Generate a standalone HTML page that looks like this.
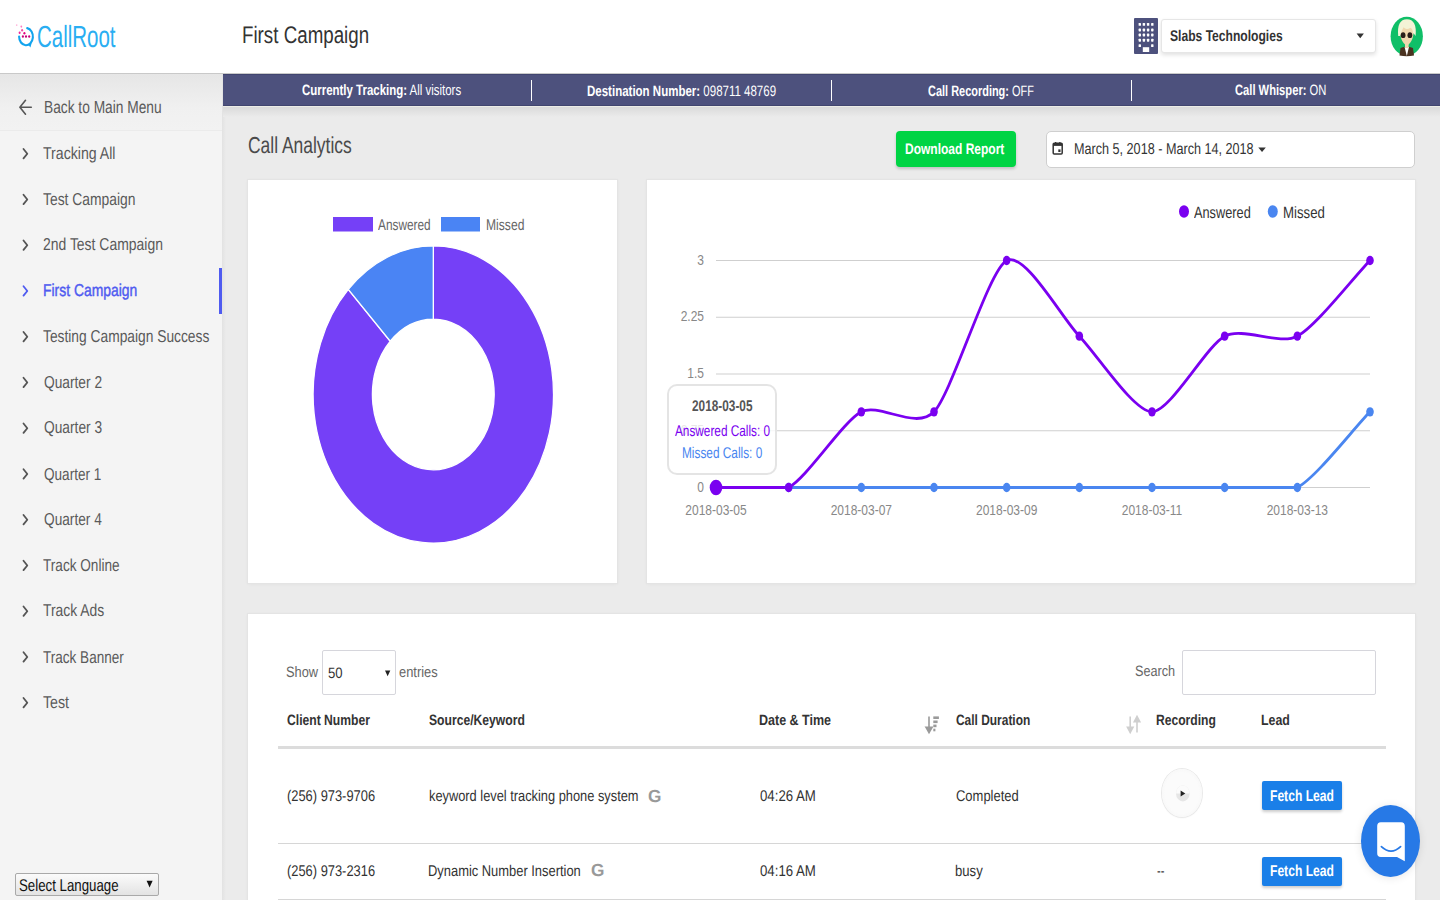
<!DOCTYPE html>
<html><head><meta charset="utf-8"><style>
html,body{margin:0;padding:0;width:1440px;height:900px;overflow:hidden;background:#ebebeb;font-family:"Liberation Sans",sans-serif}
.a{position:absolute}
.t{position:absolute;white-space:nowrap;line-height:1;transform-origin:0 0;text-rendering:geometricPrecision;font-family:'Liberation Sans',sans-serif}.t b{font-weight:700}
svg{position:absolute;left:0;top:0}
</style></head><body>
<!-- header -->
<div class="a" style="left:0;top:0;width:1440px;height:73px;background:#fff"></div>
<div class="a" style="left:0;top:73px;width:1440px;height:1px;background:#c9c9c9"></div>
<!-- sidebar -->
<div class="a" style="left:0;top:74px;width:222px;height:826px;background:#f4f4f4"></div>
<div class="a" style="left:0;top:74px;width:222px;height:56px;background:linear-gradient(#e6e6e6,#f0f0f0 60%,#f2f2f2)"></div>
<div class="a" style="left:0;top:130px;width:222px;height:1px;background:#ebebeb"></div>
<div class="a" style="left:222px;top:74px;width:4px;height:826px;background:linear-gradient(90deg,#e2e2e2,#ebebeb)"></div>
<div class="a" style="left:219px;top:268px;width:3px;height:46px;background:#4f5bf0"></div>
<!-- info bar -->
<div class="a" style="left:223px;top:74px;width:1217px;height:32px;background:#4d517d;border-top:1px solid #41456f;border-bottom:1px solid #41456f;box-sizing:border-box"></div>
<div class="a" style="left:223px;top:106px;width:1217px;height:1px;background:#ecece6"></div><div class="a" style="left:223px;top:107px;width:1217px;height:10px;background:linear-gradient(#dadada,#ebebeb)"></div>
<div class="a" style="left:531px;top:80px;width:1px;height:21px;background:#fff"></div>
<div class="a" style="left:831px;top:80px;width:1px;height:21px;background:#fff"></div>
<div class="a" style="left:1131px;top:80px;width:1px;height:21px;background:#fff"></div>
<!-- cards -->
<div class="a" style="left:248px;top:180px;width:369px;height:403px;background:#fff;box-shadow:0 0 1px 1px #e4e4e4,0 1px 4px rgba(0,0,0,.05)"></div>
<div class="a" style="left:647px;top:180px;width:768px;height:403px;background:#fff;box-shadow:0 0 1px 1px #e4e4e4,0 1px 4px rgba(0,0,0,.05)"></div>
<div class="a" style="left:248px;top:614px;width:1167px;height:300px;background:#fff;box-shadow:0 0 1px 1px #e4e4e4,0 1px 4px rgba(0,0,0,.05)"></div>
<!-- buttons / inputs -->
<div class="a" style="left:896px;top:131px;width:120px;height:36px;background:#00d444;border-radius:4px;box-shadow:0 2px 3px rgba(0,0,0,.18)"></div>
<div class="a" style="left:1046px;top:131px;width:367px;height:35px;background:#fff;border:1px solid #cfcfcf;border-radius:5px"></div>
<div class="a" style="left:1161px;top:19px;width:215px;height:34px;background:#fff;border-radius:3px;box-sizing:border-box;border:1px solid #e6e6e6;box-shadow:0 2px 4px rgba(0,0,0,.12)"></div>
<div class="a" style="left:1134px;top:18px;width:24px;height:36px;background:#4d517d;border-radius:1px"></div>
<!-- table bits -->
<div class="a" style="left:322px;top:650px;width:72px;height:43px;border:1px solid #d6d6dc;border-radius:2px"></div>
<div class="a" style="left:1182px;top:650px;width:192px;height:43px;border:1px solid #d6d6dc;border-radius:2px"></div>
<div class="a" style="left:278px;top:746px;width:1108px;height:3px;background:#dcdcdc"></div>
<div class="a" style="left:278px;top:843px;width:1108px;height:1px;background:#d6d6d6"></div>
<div class="a" style="left:278px;top:899px;width:1108px;height:1px;background:#d6d6d6"></div>
<div class="a" style="left:1262px;top:781px;width:80px;height:29px;background:#1a7fe8;border-radius:2px;box-shadow:0 2px 3px rgba(0,0,0,.2)"></div>
<div class="a" style="left:1262px;top:857px;width:80px;height:29px;background:#1a7fe8;border-radius:2px;box-shadow:0 2px 3px rgba(0,0,0,.2)"></div>
<div class="a" style="left:1162px;top:769px;width:40px;height:48px;border-radius:50%;background:radial-gradient(#fbfbfb 60%,#f1f1f1);box-shadow:0 0 0 1px #e9e9e9,0 1px 2px rgba(0,0,0,.06)"></div>
<!-- select language -->
<div class="a" style="left:15px;top:873px;width:142px;height:21px;border:1px solid #a9a9a9;border-radius:2px;background:linear-gradient(#fbfbfb,#e3e3e3)"></div>
<!-- intercom -->
<div class="a" style="left:1361px;top:805px;width:59px;height:72px;border-radius:50%;background:#2779e6;box-shadow:0 1px 8px rgba(0,0,0,.10)"></div>
<svg width="1440" height="900">
<path d='M433.30,245.93 A120.2,148.5672 0 1 1 348.31,289.45 L390.24,341.27 A60.9,75.27239999999999 0 1 0 433.30,319.23 Z' fill='#7540f7' stroke='#fff' stroke-width='1.3'/><path d='M348.31,289.45 A120.2,148.5672 0 0 1 433.30,245.93 L433.30,319.23 A60.9,75.27239999999999 0 0 0 390.24,341.27 Z' fill='#4a84f4' stroke='#fff' stroke-width='1.3'/>
<rect x="333" y="217" width="40" height="14.5" fill="#7540f7"/>
<rect x="441" y="217" width="39" height="14.5" fill="#4a84f4"/>
<line x1='716' x2='1370' y1='487.50' y2='487.50' stroke='#cfcfcf' stroke-width='1.2'/>
<line x1='716' x2='1370' y1='430.75' y2='430.75' stroke='#cfcfcf' stroke-width='1.2'/>
<line x1='716' x2='1370' y1='374.00' y2='374.00' stroke='#cfcfcf' stroke-width='1.2'/>
<line x1='716' x2='1370' y1='317.25' y2='317.25' stroke='#cfcfcf' stroke-width='1.2'/>
<line x1='716' x2='1370' y1='260.50' y2='260.50' stroke='#cfcfcf' stroke-width='1.2'/>
<path d='M716.00,487.50 C734.17,487.50 770.50,487.50 788.67,487.50 C806.83,487.50 843.17,487.50 861.33,487.50 C879.50,487.50 915.83,487.50 934.00,487.50 C952.17,487.50 988.50,487.50 1006.67,487.50 C1024.83,487.50 1061.17,487.50 1079.33,487.50 C1097.50,487.50 1133.83,487.50 1152.00,487.50 C1170.17,487.50 1206.50,487.50 1224.67,487.50 C1242.83,487.50 1279.17,487.50 1297.33,487.50 C1315.50,478.04 1351.83,430.75 1370.00,411.83' fill='none' stroke='#4a86f0' stroke-width='2.8'/>
<path d='M716.00,487.50 C734.17,487.50 770.50,487.50 788.67,487.50 C806.83,478.04 843.17,421.29 861.33,411.83 C879.50,402.38 915.83,430.75 934.00,411.83 C952.17,392.92 988.50,269.96 1006.67,260.50 C1024.83,251.04 1061.17,317.25 1079.33,336.17 C1097.50,355.08 1133.83,411.83 1152.00,411.83 C1170.17,411.83 1206.50,345.62 1224.67,336.17 C1242.83,326.71 1279.17,345.62 1297.33,336.17 C1315.50,326.71 1351.83,279.42 1370.00,260.50' fill='none' stroke='#7a00f0' stroke-width='2.8'/>
<ellipse cx='716.00' cy='487.50' rx='3.8' ry='4.70' fill='#4a86f0'/>
<ellipse cx='788.67' cy='487.50' rx='3.8' ry='4.70' fill='#4a86f0'/>
<ellipse cx='861.33' cy='487.50' rx='3.8' ry='4.70' fill='#4a86f0'/>
<ellipse cx='934.00' cy='487.50' rx='3.8' ry='4.70' fill='#4a86f0'/>
<ellipse cx='1006.67' cy='487.50' rx='3.8' ry='4.70' fill='#4a86f0'/>
<ellipse cx='1079.33' cy='487.50' rx='3.8' ry='4.70' fill='#4a86f0'/>
<ellipse cx='1152.00' cy='487.50' rx='3.8' ry='4.70' fill='#4a86f0'/>
<ellipse cx='1224.67' cy='487.50' rx='3.8' ry='4.70' fill='#4a86f0'/>
<ellipse cx='1297.33' cy='487.50' rx='3.8' ry='4.70' fill='#4a86f0'/>
<ellipse cx='1370.00' cy='411.83' rx='3.8' ry='4.70' fill='#4a86f0'/>
<ellipse cx='716.00' cy='487.50' rx='6.3' ry='7.79' fill='#7a00f0'/>
<ellipse cx='788.67' cy='487.50' rx='3.8' ry='4.70' fill='#7a00f0'/>
<ellipse cx='861.33' cy='411.83' rx='3.8' ry='4.70' fill='#7a00f0'/>
<ellipse cx='934.00' cy='411.83' rx='3.8' ry='4.70' fill='#7a00f0'/>
<ellipse cx='1006.67' cy='260.50' rx='3.8' ry='4.70' fill='#7a00f0'/>
<ellipse cx='1079.33' cy='336.17' rx='3.8' ry='4.70' fill='#7a00f0'/>
<ellipse cx='1152.00' cy='411.83' rx='3.8' ry='4.70' fill='#7a00f0'/>
<ellipse cx='1224.67' cy='336.17' rx='3.8' ry='4.70' fill='#7a00f0'/>
<ellipse cx='1297.33' cy='336.17' rx='3.8' ry='4.70' fill='#7a00f0'/>
<ellipse cx='1370.00' cy='260.50' rx='3.8' ry='4.70' fill='#7a00f0'/>
<g font-family="Liberation Sans" font-size="12" fill="#888">
<text x='704' y='397.73' text-anchor='end' transform='scale(1,1.236)'>0</text>
<text x='704' y='351.82' text-anchor='end' transform='scale(1,1.236)'>0.75</text>
<text x='704' y='305.91' text-anchor='end' transform='scale(1,1.236)'>1.5</text>
<text x='704' y='259.99' text-anchor='end' transform='scale(1,1.236)'>2.25</text>
<text x='704' y='214.08' text-anchor='end' transform='scale(1,1.236)'>3</text>
<text x='716.00' y='416.42' text-anchor='middle' transform='scale(1,1.236)'>2018-03-05</text>
<text x='861.33' y='416.42' text-anchor='middle' transform='scale(1,1.236)'>2018-03-07</text>
<text x='1006.67' y='416.42' text-anchor='middle' transform='scale(1,1.236)'>2018-03-09</text>
<text x='1152.00' y='416.42' text-anchor='middle' transform='scale(1,1.236)'>2018-03-11</text>
<text x='1297.33' y='416.42' text-anchor='middle' transform='scale(1,1.236)'>2018-03-13</text>
</g>
<path d='M25.5,100.3 L19.9,107.2 L25.5,114.2 M20.2,107.2 L31.3,107.2' fill='none' stroke='#555' stroke-width='1.6' stroke-linecap='round' stroke-linejoin='round'/>
<path d='M23.5,149.00 L27.3,153.70 L23.5,158.40' fill='none' stroke='#555' stroke-width='1.8' stroke-linecap='round' stroke-linejoin='round'/>
<path d='M23.5,194.75 L27.3,199.45 L23.5,204.15' fill='none' stroke='#555' stroke-width='1.8' stroke-linecap='round' stroke-linejoin='round'/>
<path d='M23.5,240.50 L27.3,245.20 L23.5,249.90' fill='none' stroke='#555' stroke-width='1.8' stroke-linecap='round' stroke-linejoin='round'/>
<path d='M23.5,286.25 L27.3,290.95 L23.5,295.65' fill='none' stroke='#4f5bf0' stroke-width='1.8' stroke-linecap='round' stroke-linejoin='round'/>
<path d='M23.5,332.00 L27.3,336.70 L23.5,341.40' fill='none' stroke='#555' stroke-width='1.8' stroke-linecap='round' stroke-linejoin='round'/>
<path d='M23.5,377.75 L27.3,382.45 L23.5,387.15' fill='none' stroke='#555' stroke-width='1.8' stroke-linecap='round' stroke-linejoin='round'/>
<path d='M23.5,423.50 L27.3,428.20 L23.5,432.90' fill='none' stroke='#555' stroke-width='1.8' stroke-linecap='round' stroke-linejoin='round'/>
<path d='M23.5,469.25 L27.3,473.95 L23.5,478.65' fill='none' stroke='#555' stroke-width='1.8' stroke-linecap='round' stroke-linejoin='round'/>
<path d='M23.5,515.00 L27.3,519.70 L23.5,524.40' fill='none' stroke='#555' stroke-width='1.8' stroke-linecap='round' stroke-linejoin='round'/>
<path d='M23.5,560.75 L27.3,565.45 L23.5,570.15' fill='none' stroke='#555' stroke-width='1.8' stroke-linecap='round' stroke-linejoin='round'/>
<path d='M23.5,606.50 L27.3,611.20 L23.5,615.90' fill='none' stroke='#555' stroke-width='1.8' stroke-linecap='round' stroke-linejoin='round'/>
<path d='M23.5,652.25 L27.3,656.95 L23.5,661.65' fill='none' stroke='#555' stroke-width='1.8' stroke-linecap='round' stroke-linejoin='round'/>
<path d='M23.5,698.00 L27.3,702.70 L23.5,707.40' fill='none' stroke='#555' stroke-width='1.8' stroke-linecap='round' stroke-linejoin='round'/>
<path d='M27.20,28.13 A6.9,8.6 0 1 1 19.10,36.60' fill='none' stroke='#12a4ee' stroke-width='2.1' stroke-linecap='round'/>
<path d='M28.2,44.6 L30.4,47.6 L31.6,43.2 Z' fill='#12a4ee'/>
<ellipse cx='16.7' cy='25.1' rx='0.8' ry='0.96' fill='#ffb3d9'/>
<ellipse cx='21.3' cy='26.6' rx='0.9' ry='1.08' fill='#ff7ac0'/>
<ellipse cx='22.1' cy='30.3' rx='1.0' ry='1.20' fill='#f54aa8'/>
<ellipse cx='19.6' cy='32.8' rx='1.0' ry='1.20' fill='#ee2a98'/>
<ellipse cx='24.4' cy='33.2' rx='1.05' ry='1.26' fill='#e6007e'/>
<ellipse cx='22.9' cy='36.5' rx='1.05' ry='1.26' fill='#c8007a'/>
<ellipse cx='26.0' cy='36.5' rx='1.05' ry='1.26' fill='#c8007a'/>
<ellipse cx='29.2' cy='36.5' rx='1.05' ry='1.26' fill='#c8007a'/>
<rect x='1138.6' y='22.95' width='2.4' height='2.9' rx='0.6' fill='#fff'/>
<rect x='1138.6' y='28.55' width='2.4' height='2.9' rx='0.6' fill='#fff'/>
<rect x='1138.6' y='33.55' width='2.4' height='2.9' rx='0.6' fill='#fff'/>
<rect x='1138.6' y='38.75' width='2.4' height='2.9' rx='0.6' fill='#fff'/>
<rect x='1142.7' y='22.95' width='2.4' height='2.9' rx='0.6' fill='#fff'/>
<rect x='1142.7' y='28.55' width='2.4' height='2.9' rx='0.6' fill='#fff'/>
<rect x='1142.7' y='33.55' width='2.4' height='2.9' rx='0.6' fill='#fff'/>
<rect x='1142.7' y='38.75' width='2.4' height='2.9' rx='0.6' fill='#fff'/>
<rect x='1146.9' y='22.95' width='2.4' height='2.9' rx='0.6' fill='#fff'/>
<rect x='1146.9' y='28.55' width='2.4' height='2.9' rx='0.6' fill='#fff'/>
<rect x='1146.9' y='33.55' width='2.4' height='2.9' rx='0.6' fill='#fff'/>
<rect x='1146.9' y='38.75' width='2.4' height='2.9' rx='0.6' fill='#fff'/>
<rect x='1151.1' y='22.95' width='2.4' height='2.9' rx='0.6' fill='#fff'/>
<rect x='1151.1' y='28.55' width='2.4' height='2.9' rx='0.6' fill='#fff'/>
<rect x='1151.1' y='33.55' width='2.4' height='2.9' rx='0.6' fill='#fff'/>
<rect x='1151.1' y='38.75' width='2.4' height='2.9' rx='0.6' fill='#fff'/>
<rect x='1138.6' y='44.15' width='2.4' height='2.9' rx='0.6' fill='#fff'/><rect x='1151.1' y='44.15' width='2.4' height='2.9' rx='0.6' fill='#fff'/>
<rect x='1142.8' y='47.2' width='6.4' height='4.8' fill='#fff'/>
<path d='M1356.6,33.4 L1363.9,33.4 L1360.25,38.3 Z' fill='#333'/>
<ellipse cx='1406.75' cy='36.25' rx='16.15' ry='19.45' fill='#10bf68'/>
<path d='M1399.5,55.5 L1400.5,48 Q1406.8,45 1413,48 L1414,55.5 Q1406.8,57 1399.5,55.5 Z' fill='#4a3220'/>
<path d='M1404.6,47 L1406.8,56 L1409,47 Z' fill='#fff'/>
<path d='M1399.6,26 Q1399.4,42 1406.8,45.5 Q1414.2,42 1414,26 Z' fill='#efd7ae'/>
<rect x='1405' y='43' width='3.6' height='5' fill='#efd7ae'/>
<path d='M1398.2,36 Q1396.6,19.5 1406.9,19.3 Q1417.2,19.5 1415.6,36 Q1414,33.5 1413,33 Q1412.6,28.6 1410.5,27.8 Q1406,30.5 1403.6,27.2 Q1401.2,31 1400.2,36 Z' fill='#f4f3d6'/>
<ellipse cx='1403.1' cy='35.2' rx='2.4' ry='2.9' fill='#2a1f1a'/><ellipse cx='1409.9' cy='35.2' rx='2.4' ry='2.9' fill='#2a1f1a'/>
<rect x='1053.2' y='143.3' width='9' height='10.6' rx='1' fill='none' stroke='#333' stroke-width='1.5'/>
<rect x='1053.2' y='143.3' width='9' height='2.6' fill='#333'/>
<rect x='1055' y='142' width='1.3' height='2' fill='#333'/><rect x='1059.2' y='142' width='1.3' height='2' fill='#333'/>
<rect x='1058.3' y='149.4' width='2.2' height='2.6' fill='#333'/>
<path d='M1258.3,147.6 L1265.8,147.6 L1262.05,151.9 Z' fill='#333'/>
<path d='M385,670.5 L390.3,670.5 L387.65,676.3 Z' fill='#222'/>
<path d='M929,716.5 L929,729 M925.9,727.2 L929,732.6 L932.1,727.2 Z' fill='#9a9a9a' stroke='#9a9a9a' stroke-width='1.6'/>
<rect x='933.3' y='716.4' width='5.6' height='2.6' fill='#9a9a9a'/>
<rect x='933.3' y='720.5' width='4.3' height='2.6' fill='#9a9a9a'/>
<rect x='933.3' y='724.6' width='3.2' height='2.6' fill='#9a9a9a'/>
<rect x='933.3' y='728.7' width='2.1' height='2.6' fill='#9a9a9a'/>
<path d='M1130.2,716.5 L1130.2,729 M1127.4,727.2 L1130.2,732.6 L1133,727.2 Z' fill='#cfcfcf' stroke='#cfcfcf' stroke-width='1.6'/>
<path d='M1137,720 L1137,732.6 M1134.2,721.8 L1137,716.4 L1139.8,721.8 Z' fill='#cfcfcf' stroke='#cfcfcf' stroke-width='1.6'/>
<ellipse cx='1182.8' cy='793.4' rx='6.8' ry='8' fill='#e6e6e6'/>
<path d='M1176,793.4 A6.8,8 0 0 1 1189.6,793.4 Z' fill='#fbfbfb'/>
<path d='M1180.6,790.4 L1185.3,793.4 L1180.6,796.4 Z' fill='#222'/>
<path d='M146.6,880.8 L152.6,880.8 L149.6,887.6 Z' fill='#111'/>
<path d='M1380.8,822.2 L1401.2,822.2 Q1404.8,822.2 1404.8,826 L1404.8,861.3 L1397,857 L1380.8,857 Q1377.2,857 1377.2,853.2 L1377.2,826 Q1377.2,822.2 1380.8,822.2 Z' fill='#fff'/>
<path d='M1381.4,846.6 Q1391,855.5 1400.6,846.6' fill='none' stroke='#2779e6' stroke-width='1.7' stroke-linecap='round'/>
<ellipse cx="1184" cy="211.5" rx="5" ry="6.2" fill="#7a00f0"/>
<ellipse cx="1272.8" cy="211.5" rx="5" ry="6.2" fill="#4a86f0"/>
</svg>
<!-- tooltip -->
<div class="a" style="left:667px;top:384px;width:106px;height:87px;border:2.5px solid rgba(225,225,225,.9);border-radius:10px;background:rgba(255,255,255,.8)"></div>
<span class='t'  style='left:36.92px;top:24.16px;font-size:24.73px;font-weight:400;color:#2aaef2;transform:scale(0.8287,1.236);'>CallRoot</span>
<span class='t'  style='left:241.85px;top:24.02px;font-size:19.41px;font-weight:400;color:#333;transform:scale(0.9662,1.236);'>First Campaign</span>
<span class='t'  style='left:1170.22px;top:28.98px;font-size:12.54px;font-weight:700;color:#333;transform:scale(0.9651,1.236);'>Slabs Technologies</span>
<span class='t'  style='left:302.35px;top:83.48px;font-size:12.19px;font-weight:400;color:#fff;transform:scale(0.9400,1.236);'><b>Currently Tracking:</b> All visitors</span>
<span class='t'  style='left:586.55px;top:83.57px;font-size:12.19px;font-weight:400;color:#fff;transform:scale(0.9439,1.236);'><b>Destination Number:</b> 098711 48769</span>
<span class='t'  style='left:928.04px;top:83.56px;font-size:12.19px;font-weight:400;color:#fff;transform:scale(0.8989,1.236);'><b>Call Recording:</b> OFF</span>
<span class='t'  style='left:1235.45px;top:83.48px;font-size:12.19px;font-weight:400;color:#fff;transform:scale(0.9177,1.236);'><b>Call Whisper:</b> ON</span>
<span class='t'  style='left:44.36px;top:98.53px;font-size:14.20px;font-weight:400;color:#5a5a5a;transform:scale(0.9687,1.236);'>Back to Main Menu</span>
<span class='t'  style='left:43.39px;top:145.36px;font-size:13.96px;font-weight:400;color:#5a5a5a;transform:scale(1.0128,1.236);'>Tracking All</span>
<span class='t'  style='left:43.40px;top:190.86px;font-size:13.96px;font-weight:400;color:#5a5a5a;transform:scale(0.9939,1.236);'>Test Campaign</span>
<span class='t'  style='left:43.45px;top:236.34px;font-size:13.96px;font-weight:400;color:#5a5a5a;transform:scale(0.9993,1.236);'>2nd Test Campaign</span>
<span class='t'  style='left:43.48px;top:282.40px;font-size:13.96px;font-weight:400;color:#4f5bf0;transform:scale(0.9968,1.236);-webkit-text-stroke:0.35px #4f5bf0;'>First Campaign</span>
<span class='t'  style='left:43.40px;top:328.36px;font-size:13.96px;font-weight:400;color:#5a5a5a;transform:scale(0.9882,1.236);'>Testing Campaign Success</span>
<span class='t'  style='left:43.61px;top:373.84px;font-size:13.96px;font-weight:400;color:#5a5a5a;transform:scale(0.9849,1.236);'>Quarter 2</span>
<span class='t'  style='left:43.61px;top:419.34px;font-size:13.96px;font-weight:400;color:#5a5a5a;transform:scale(0.9853,1.236);'>Quarter 3</span>
<span class='t'  style='left:43.61px;top:465.84px;font-size:13.96px;font-weight:400;color:#5a5a5a;transform:scale(0.9727,1.236);'>Quarter 1</span>
<span class='t'  style='left:43.61px;top:511.34px;font-size:13.96px;font-weight:400;color:#5a5a5a;transform:scale(0.9798,1.236);'>Quarter 4</span>
<span class='t'  style='left:43.42px;top:556.86px;font-size:13.96px;font-weight:400;color:#5a5a5a;transform:scale(0.9746,1.236);'>Track Online</span>
<span class='t'  style='left:43.40px;top:602.36px;font-size:13.96px;font-weight:400;color:#5a5a5a;transform:scale(0.9955,1.236);'>Track Ads</span>
<span class='t'  style='left:43.42px;top:648.86px;font-size:13.96px;font-weight:400;color:#5a5a5a;transform:scale(0.9701,1.236);'>Track Banner</span>
<span class='t'  style='left:43.38px;top:694.36px;font-size:13.96px;font-weight:400;color:#5a5a5a;transform:scale(1.0185,1.236);'>Test</span>
<span class='t'  style='left:248.07px;top:134.20px;font-size:18.70px;font-weight:400;color:#4a4a4a;transform:scale(0.9335,1.236);'>Call Analytics</span>
<span class='t'  style='left:905.48px;top:141.67px;font-size:12.31px;font-weight:700;color:#fff;transform:scale(0.9758,1.236);'>Download Report</span>
<span class='t'  style='left:1073.91px;top:141.87px;font-size:12.78px;font-weight:400;color:#333;transform:scale(0.9887,1.236);'>March 5, 2018 - March 14, 2018</span>
<span class='t'  style='left:378.30px;top:217.77px;font-size:12.57px;font-weight:400;color:#666;transform:scale(0.9423,1.236);'>Answered</span>
<span class='t'  style='left:486.03px;top:217.96px;font-size:12.57px;font-weight:400;color:#666;transform:scale(0.9642,1.236);'>Missed</span>
<span class='t'  style='left:1193.62px;top:203.83px;font-size:13.25px;font-weight:400;color:#333;transform:scale(0.9631,1.236);'>Answered</span>
<span class='t'  style='left:1282.83px;top:203.85px;font-size:13.25px;font-weight:400;color:#333;transform:scale(0.9968,1.236);'>Missed</span>
<span class='t'  style='left:286.15px;top:664.56px;font-size:12.19px;font-weight:400;color:#666;transform:scale(1.0526,1.236);'>Show</span>
<span class='t'  style='left:328.47px;top:666.06px;font-size:12.19px;font-weight:400;color:#333;transform:scale(1.0759,1.236);'>50</span>
<span class='t'  style='left:398.81px;top:664.51px;font-size:12.19px;font-weight:400;color:#666;transform:scale(1.0592,1.236);'>entries</span>
<span class='t'  style='left:1135.15px;top:664.46px;font-size:12.19px;font-weight:400;color:#666;transform:scale(1.0388,1.236);'>Search</span>
<span class='t'  style='left:286.91px;top:712.74px;font-size:12.07px;font-weight:700;color:#333;transform:scale(1.0058,1.236);'>Client Number</span>
<span class='t'  style='left:428.93px;top:712.83px;font-size:12.07px;font-weight:700;color:#333;transform:scale(1.0066,1.236);'>Source/Keyword</span>
<span class='t'  style='left:759.05px;top:712.76px;font-size:12.07px;font-weight:700;color:#333;transform:scale(1.0369,1.236);'>Date &amp; Time</span>
<span class='t'  style='left:955.92px;top:712.74px;font-size:12.07px;font-weight:700;color:#333;transform:scale(0.9894,1.236);'>Call Duration</span>
<span class='t'  style='left:1156.48px;top:712.78px;font-size:12.07px;font-weight:700;color:#333;transform:scale(1.0037,1.236);'>Recording</span>
<span class='t'  style='left:1261.01px;top:712.74px;font-size:12.07px;font-weight:700;color:#333;transform:scale(1.0248,1.236);'>Lead</span>
<span class='t'  style='left:286.93px;top:789.31px;font-size:12.54px;font-weight:400;color:#333;transform:scale(1.0276,1.236);'>(256) 973-9706</span>
<span class='t'  style='left:428.78px;top:789.40px;font-size:12.54px;font-weight:400;color:#333;transform:scale(1.0231,1.236);'>keyword level tracking phone system</span>
<span class='t'  style='left:760.29px;top:789.33px;font-size:12.54px;font-weight:400;color:#333;transform:scale(1.0557,1.236);'>04:26 AM</span>
<span class='t'  style='left:956.04px;top:789.38px;font-size:12.54px;font-weight:400;color:#333;transform:scale(1.0354,1.236);'>Completed</span>
<span class='t'  style='left:286.93px;top:864.31px;font-size:12.54px;font-weight:400;color:#333;transform:scale(1.0276,1.236);'>(256) 973-2316</span>
<span class='t'  style='left:428.28px;top:864.39px;font-size:12.54px;font-weight:400;color:#333;transform:scale(1.0299,1.236);'>Dynamic Number Insertion</span>
<span class='t'  style='left:760.29px;top:864.33px;font-size:12.54px;font-weight:400;color:#333;transform:scale(1.0557,1.236);'>04:16 AM</span>
<span class='t'  style='left:955.39px;top:864.30px;font-size:12.54px;font-weight:400;color:#333;transform:scale(1.0459,1.236);'>busy</span>
<span class='t'  style='left:1157.18px;top:864.28px;font-size:12.54px;font-weight:400;color:#333;transform:scale(0.8894,1.236);'>--</span>
<span class='t'  style='left:647.92px;top:787.98px;font-size:14.20px;font-weight:700;color:#999;transform:scale(1.2159,1.236);'>G</span>
<span class='t'  style='left:591.01px;top:862.36px;font-size:14.20px;font-weight:700;color:#999;transform:scale(1.2161,1.236);'>G</span>
<span class='t'  style='left:1269.99px;top:788.63px;font-size:12.78px;font-weight:700;color:#fff;transform:scale(0.9481,1.236);'>Fetch Lead</span>
<span class='t'  style='left:1269.99px;top:864.23px;font-size:12.78px;font-weight:700;color:#fff;transform:scale(0.9481,1.236);'>Fetch Lead</span>
<span class='t'  style='left:19.18px;top:876.52px;font-size:13.73px;font-weight:400;color:#111;transform:scale(0.9666,1.236);'>Select Language</span>
<span class='t'  style='left:691.87px;top:398.92px;font-size:12.57px;font-weight:700;color:#555;transform:scale(0.9416,1.236);'>2018-03-05</span>
<span class='t'  style='left:674.68px;top:423.51px;font-size:12.57px;font-weight:400;color:#7a00f0;transform:scale(0.9393,1.236);'>Answered Calls: 0</span>
<span class='t'  style='left:681.53px;top:446.07px;font-size:12.57px;font-weight:400;color:#4a86f0;transform:scale(0.9427,1.236);'>Missed Calls: 0</span>
</body></html>
